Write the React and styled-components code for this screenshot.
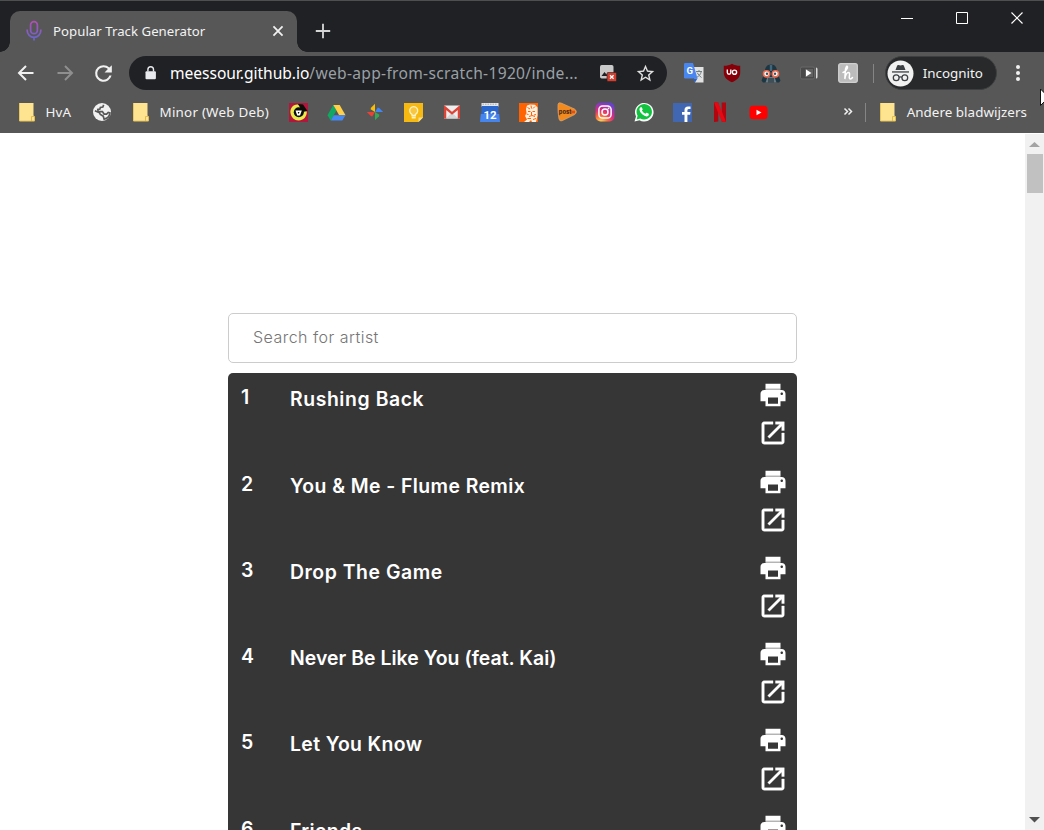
import React from "react";
import styled, { createGlobalStyle } from "styled-components";

const Global = createGlobalStyle`
  * { box-sizing: border-box; }
  html, body { margin: 0; padding: 0; overflow: hidden; background: #fff; }
  svg { display: block; flex: none; }
`;

const Window = styled.div`
  position: relative;
  display: flex;
  flex-direction: column;
  width: 1044px;
  height: 830px;
  overflow: hidden;
  background: #fff;
  font-family: "Noto Sans", "Open Sans", sans-serif;
`;

const TitleBar = styled.header`
  display: flex;
  height: 52px;
  border-top: 1px solid #4d504f;
  background: #202124;
  padding-left: 10px;
`;

const Tab = styled.div`
  position: relative;
  display: flex;
  align-items: center;
  width: 287px;
  height: 41px;
  margin-top: 10px;
  padding: 0 12px 1px 15px;
  border-radius: 10px 10px 0 0;
  background: #575757;
  &::before, &::after {
    content: "";
    position: absolute;
    bottom: 0;
    width: 10px;
    height: 10px;
  }
  &::before { left: -10px; background: radial-gradient(circle at 0 0, transparent 9.5px, #575757 10px); }
  &::after { right: -10px; background: radial-gradient(circle at 100% 0, transparent 9.5px, #575757 10px); }
`;

const Label = styled.span`
  flex: none;
  width: ${(p) => p.$w}px;
  font-size: ${(p) => p.$size || 13.4}px;
  letter-spacing: ${(p) => p.$ls || 0}px;
  line-height: 20px;
  color: ${(p) => p.$color || "#f3f3f3"};
  white-space: nowrap;
`;

const TabTitle = styled(Label)`margin-left: 10px;`;
const TabClose = styled.div`margin-left: auto;`;
const NewTab = styled.div`margin: 22px 0 0 18px;`;

const WindowControls = styled.div`
  display: flex;
  margin-left: auto;
  height: 34px;
`;

const ControlButton = styled.div`
  display: flex;
  align-items: center;
  justify-content: center;
  width: 55px;
`;

const Toolbar = styled.div`
  display: flex;
  align-items: center;
  height: 42px;
  padding-left: 7.3px;
  background: #575757;
`;

const Cell = styled.div`
  display: flex;
  flex: none;
  align-items: center;
  justify-content: center;
  width: 38.4px;
  height: 30px;
`;

const Omnibox = styled.div`
  display: flex;
  flex: none;
  align-items: center;
  width: 538px;
  height: 34px;
  margin: 0 7.8px 0 6.5px;
  padding-left: 14px;
  border-radius: 17px;
  background: #202124;
`;

const Url = styled.div`
  flex: none;
  width: 419px;
  margin-left: 11px;
  font-size: 15.6px;
  line-height: 22px;
  letter-spacing: 0.3px;
  color: #9aa0a6;
  white-space: nowrap;
`;
const Host = styled.span`color: #fff; letter-spacing: -0.04px;`;
const StarSlot = styled.div`margin-left: 8px;`;

const Divider = styled.div`
  flex: none;
  width: 1px;
  height: 19px;
  margin: ${(p) => p.$m};
  background: #858585;
`;

const IncognitoPill = styled.div`
  display: flex;
  flex: none;
  align-items: center;
  width: 112px;
  height: 34px;
  padding-left: 1px;
  border: 1px solid #3e3f41;
  border-radius: 17px;
  background: #28292b;
`;
const PillLabel = styled(Label)`margin-left: 9px;`;
const MenuDots = styled.div`margin-left: 18px;`;

const Bookmarks = styled.nav`
  display: flex;
  align-items: center;
  height: 39px;
  padding: 0 0 3px 18px;
  background: #575757;
`;

const Folder = styled.div`
  display: flex;
  align-items: center;
  gap: 9.6px;
  margin-right: ${(p) => p.$mr || 0}px;
`;
const GlobeMark = styled.div`margin-right: 20px;`;
const More = styled.div`margin-left: 64.5px;`;

const Page = styled.main`
  display: flex;
  flex: 1;
  min-height: 0;
  font-family: "Inter", sans-serif;
`;

const Content = styled.div`
  flex: 1;
  display: flex;
  flex-direction: column;
  padding: 180px 228px 0;
  overflow: hidden;
`;

const SearchField = styled.div`
  flex: none;
  display: flex;
  align-items: center;
  height: 50px;
  padding: 0 24px 2px;
  border: 1px solid #ccc;
  border-radius: 5px;
  color: #757575;
  font-size: 16px;
  font-weight: 300;
  letter-spacing: 0.47px;
`;

const TrackList = styled.ol`
  flex: none;
  margin: 10px 0 0;
  padding: 0;
  list-style: none;
  border-radius: 5px;
  background: #363636;
`;

const Track = styled.li`
  display: flex;
  height: 86.3px;
  padding: 7.3px 8.6px 0 13px;
  color: #fff;
  font-weight: 600;
`;
const Rank = styled.span`
  width: 49px;
  padding-top: 5px;
  font-size: 19.5px;
  line-height: 24px;
`;
const TrackTitle = styled.span`
  flex: 1;
  padding-top: 7px;
  font-size: 19.4px;
  line-height: 24px;
  letter-spacing: ${(p) => p.$ls}px;
`;
const Actions = styled.div`
  display: flex;
  flex-direction: column;
  gap: 8.2px;
`;

const Scrollbar = styled.aside`
  display: flex;
  flex-direction: column;
  align-items: center;
  justify-content: space-between;
  width: 19px;
  margin-top: 1px;
  padding: 8px 0 7px;
  background: #f1f1f1;
`;
const ThumbGroup = styled.div`
  display: flex;
  flex-direction: column;
  align-items: center;
  gap: 7px;
`;
const Thumb = styled.div`
  width: 16px;
  height: 39px;
  margin-left: 1px;
  background: #c1c1c1;
`;
const Cursor = styled.div`
  position: absolute;
  left: 1040px;
  top: 88px;
`;

const Mic = () => (
  <svg width="18" height="22" viewBox="0 0 18 22" fill="none" strokeWidth="1.7">
    <defs>
      <linearGradient id="mic" x1="0" y1="0" x2="0" y2="22" gradientUnits="userSpaceOnUse">
        <stop offset="0" stopColor="#b94bb4" />
        <stop offset="1" stopColor="#5b6bd0" />
      </linearGradient>
    </defs>
    <rect x="5.6" y="1.6" width="6.8" height="12" rx="3.4" stroke="url(#mic)" />
    <path d="M2.2 9.5v1a6.8 6.8 0 0 0 13.6 0v-1M9 17.4V20.5" stroke="url(#mic)" />
  </svg>
);

const Stroke = ({ w = 20, d, color = "#f1f1f1", sw = 2 }) => (
  <svg width={w} height={w} viewBox="0 0 20 20" fill="none" stroke={color} strokeWidth={sw}>
    <path d={d} />
  </svg>
);

const Reload = () => (
  <svg width="25" height="25" viewBox="0 0 24 24" fill="#f1f1f1">
    <path d="M17.65 6.35A7.96 7.96 0 0 0 12 4a8 8 0 1 0 7.73 10h-2.08A6 6 0 1 1 12 6c1.66 0 3.14.69 4.22 1.78L13 11h7V4l-2.35 2.35z" />
  </svg>
);

const Lock = () => (
  <svg width="16" height="16" viewBox="0 0 16 16">
    <rect x="2.500" y="6.3" width="10.4" height="8" rx="1" fill="#e8eaed" />
    <path d="M4.900 6.5V4.6a2.8 2.8 0 0 1 5.6 0v1.9" fill="none" stroke="#e8eaed" strokeWidth="1.4" />
  </svg>
);

const BlockedImage = () => (
  <svg width="18" height="18" viewBox="0 0 18 18">
    <rect x="1" y="1" width="13.5" height="13.5" rx="1.7" fill="#c9c9c9" />
    <path d="M2.5 12l3-4 2 2.5 1.5-1.8 2 3.3z" fill="#202124" />
    <rect x="8" y="8.5" width="9.5" height="9" rx="1" fill="#d23f31" stroke="#202124" strokeWidth=".6" />
    <path d="M11 11.2l3.6 3.6m0-3.6L11 14.8" stroke="#fff" strokeWidth="1.3" />
  </svg>
);

const Star = () => (
  <svg width="21" height="21" viewBox="0 0 24 24" fill="#e0e0e0">
    <path d="M22 9.24l-7.19-.62L12 2 9.19 8.63 2 9.24l5.46 4.73L5.82 21 12 17.27 18.18 21l-1.63-7.03L22 9.24zM12 15.4l-3.76 2.27 1-4.28-3.32-2.88 4.38-.38L12 6.1l1.71 4.04 4.38.38-3.32 2.88 1 4.28L12 15.4z" />
  </svg>
);

const Translate = () => (
  <svg width="20" height="20" viewBox="0 0 20 20">
    <path d="M8 4h11.5v15.5H11z" fill="#e2e2e2" />
    <path d="M12 8.5h6M15 7v1.5m2.3 0c-.6 3-2.4 4.5-4.3 5.7m.2-4.5c1 2 2.5 3.5 4.3 4.8" fill="none" stroke="#6f8085" strokeWidth="1" />
    <path d="M0 1.2Q0 0 1.2 0H9l4.5 15.5H1.2Q0 15.5 0 14.3z" fill="#4a86f0" />
    <path d="M8.5 15.5h5L11 19.5z" fill="#2e62bd" />
    <text x="2.4" y="11" fontFamily="Roboto, sans-serif" fontWeight="700" fontSize="9.5" fill="#fff">G</text>
  </svg>
);

const Shield = () => (
  <svg width="18" height="20" viewBox="0 0 18 20">
    <path d="M9 .8c2.4 1.5 5 2 8.2 2v6.7c0 4.8-3.3 7.7-8.2 9.8-4.9-2.1-8.2-5-8.2-9.8V2.8c3.2 0 5.8-.5 8.2-2z" fill="#850008" />
    <path d="M4.300 6.500v3a1.700 1.700 0 0 0 3.500 0v-3" fill="none" stroke="#fff" strokeWidth="1.4" />
    <circle cx="11.5" cy="9.2" r="2.1" fill="none" stroke="#fff" strokeWidth="1.4" />
  </svg>
);

const Vader = () => (
  <svg width="20" height="19" viewBox="0 0 20 19">
    <path d="M10 .5C14.500.5 16 4 16.200 8L19.500 16.500 18 18.500H2L.500 16.500 3.800 8C4 4 5.500 .5 10 .5z" fill="#1d3644" />
    <path d="M8.800 1h2.400v6H8.800z" fill="#40677b" />
    <path d="M6.500 13h7l2 5.500h-11z" fill="#697b84" />
    <path d="M8 14v4.500m2-4.500v4.500m2-4.500v4.500" stroke="#17252d" />
    <circle cx="5.600" cy="9.800" r="3.100" fill="#fff" stroke="#ef6b4d" strokeWidth="1.600" />
    <circle cx="14.400" cy="9.800" r="3.100" fill="#fff" stroke="#ef6b4d" strokeWidth="1.600" />
    <circle cx="6" cy="9.800" r="1.200" fill="#34505f" />
    <circle cx="14" cy="9.800" r="1.200" fill="#34505f" />
  </svg>
);

const VideoExt = () => (
  <svg width="18" height="14" viewBox="0 0 18 14">
    <rect x=".5" y="1" width="14" height="12" rx="1.5" fill="#4a4a4a" stroke="#696969" />
    <rect x="5" y="3" width="8" height="8" fill="#626262" />
    <path d="M6 3.500l5.500 3.500L6 10.500z" fill="#fff" />
    <path d="M16 1.500q1.500 0 1.500 1.500v8q0 1.500-1.500 1.500z" fill="#ddd" />
  </svg>
);

const Honey = () => (
  <svg width="20" height="20" viewBox="0 0 20 20">
    <rect x=".7" y=".7" width="18.600" height="18.600" rx="2" fill="#bcbcbc" stroke="#d0d0d0" strokeWidth="1.300" />
    <path d="M5 9.500c2.500-1 5-4 4.500-5.800-.7-1.500-2 1-2.200 4L6.800 16c.7-4 2-6.400 3.700-6.400 2 0 .6 3.400.8 5.200.2 1.500 2 1.500 3.200-.3" fill="none" stroke="#fff" strokeWidth="1.500" strokeLinecap="round" />
  </svg>
);

const IncognitoIcon = () => (
  <svg width="27" height="27" viewBox="0 0 27 27">
    <circle cx="13.5" cy="13.500" r="13" fill="#f1f1f1" />
    <path d="M8.500 10l1.600-4.300q.4-1 1.400-.7l2 .6 2-.6q1-.3 1.400.7L18.500 10z" fill="#3c4043" />
    <path d="M5 11.300h17v1.300H5z" fill="#3c4043" />
    <g fill="none" stroke="#3c4043" strokeWidth="1.300">
      <circle cx="9.200" cy="17.700" r="2.900" />
      <circle cx="17.800" cy="17.700" r="2.900" />
      <path d="M12 17.300q1.500-1 3 0" />
    </g>
  </svg>
);

const Dots = () => (
  <svg width="6" height="18" viewBox="0 0 6 18" fill="#f1f1f1">
    <circle cx="3" cy="3" r="2" /><circle cx="3" cy="9" r="2" /><circle cx="3" cy="15" r="2" />
  </svg>
);

const FolderIcon = () => (
  <svg width="18" height="20" viewBox="0 0 18 20">
    <path d="M1.500 1h14v12.500l1 1V19h-15z" fill="#fee391" />
    <path d="M1.500 1v18h15" fill="none" stroke="#e8c75e" />
    <path d="M13.500 19v-4.500h3V19" fill="none" stroke="#e3bd4d" />
  </svg>
);

const Globe = () => (
  <svg width="20" height="20" viewBox="0 0 24 24">
    <circle cx="12" cy="12" r="10.800" fill="#f1f1f1" />
    <path d="M14 3.500l-1 2.500-3 .5-.5 2-2.500.5.500 2.500h5l2 3h3l2-2 2 .5a8.500 8.500 0 0 1-7 7.500l-1-3.500-3.500-2L9 13 3.500 10.500" fill="none" stroke="#575757" strokeWidth="2" />
  </svg>
);

const MarkV = () => (
  <svg width="19" height="19" viewBox="0 0 19 19">
    <path d="M0 0h19v19H0z" fill="#b3163d" />
    <path d="M9 1.500C4 1 .8 5.500 1.500 10c.6 4.500 4 7.500 8 7.500 5 0 8.500-4 8.300-9z" fill="#e8e94b" />
    <path d="M9 1l5 .5 4.500 6.500-5 1z" fill="#0b0b08" />
    <circle cx="9.800" cy="9.300" r="5" fill="#0b0b08" />
    <path d="M6.500 7.500h6.300l-1.800 5H8.200z" fill="#fff" />
    <path d="M8.700 9h1.800l-.9 2z" fill="#0b0b08" />
  </svg>
);

const Drive = () => (
  <svg width="19" height="19" viewBox="0 0 19 19">
    <path d="M6.300 2L.5 12.300 3.700 17.500 9.500 7.500z" fill="#11a861" />
    <path d="M6.300 2h6.400l5.800 10.300h-6.300z" fill="#ffcf48" />
    <path d="M6.700 12.300h11.800l-3.200 5.200H3.700z" fill="#4688f4" />
  </svg>
);

const BLADE = "M9 .8V9L4.600 6.200 5 4.800z";
const Photos = () => (
  <svg width="18" height="18" viewBox="0 0 18 18">
    <path d={BLADE} fill="#fbbc05" />
    <path d={BLADE} fill="#4285f4" transform="rotate(90 9 9)" />
    <path d={BLADE} fill="#34a853" transform="rotate(180 9 9)" />
    <path d={BLADE} fill="#ea4335" transform="rotate(270 9 9)" />
  </svg>
);

const Keep = () => (
  <svg width="19" height="19" viewBox="0 0 19 19">
    <path d="M0 0h19v14.500L14.500 19H0z" fill="#f5b912" />
    <path d="M19 14.500h-4.500V19z" fill="#fbe08a" />
    <path d="M8 12.500v-1.200a4 4 0 1 1 3.400 0v1.200z" fill="#f8c640" stroke="#fff3c4" strokeWidth="1.300" />
    <path d="M7.700 13.500h4v2h-4z" fill="#fff3c4" />
  </svg>
);

const Gmail = () => (
  <svg width="18" height="18" viewBox="0 0 18 18">
    <path d="M1 2.500h16v13H1z" fill="#eee" />
    <path d="M3 15.500l6-6 6 6z" fill="#d5d5d5" />
    <path d="M2.100 15.500V4.500L9 10.300l6.900-5.800v11" fill="none" stroke="#dc4437" strokeWidth="2.300" />
  </svg>
);

const Calendar = () => (
  <svg width="20" height="19" viewBox="0 0 20 19">
    <path d="M1.500 0h17v4h-17z" fill="#e3e6ec" />
    <path d="M1.500 3h17v6L20 19H0L1.500 9z" fill="#2a66cc" />
    <path d="M.8 11h18.400l.8 8H0z" fill="#4585ed" />
    <path d="M2.500 1.200h15" stroke="#aaa" strokeDasharray="1.500 1" />
    <text x="10" y="15.600" textAnchor="middle" fontFamily="Roboto, sans-serif" fontWeight="700" fontSize="11.500" fill="#fff">12</text>
  </svg>
);

const Lion = () => (
  <svg width="19" height="19" viewBox="0 0 19 19">
    <path d="M0 0h19v19H0z" fill="#ff6200" />
    <path d="M8 2.500l3-1 5 .3 2.500 2.700v8L17 19h-4l-1-2-2 2H5l3-2.500-2-3.500 1.500-3-.5-4z" fill="#fff0e2" />
    <path d="M8.500 4.500l2.500 1.500M12 2.500l.5 3M16 3.500l-2 2M9 8.500h2.500m2 0H16M12.500 9v3M10 13.500l3-1 3 1M7.500 11l2 .5m-1 4h3.500m3-3.500l2-.5M14 16.500l3-1" stroke="#ff6200" strokeWidth="1" fill="none" />
  </svg>
);

const Post = () => (
  <svg width="20" height="20" viewBox="0 0 20 20">
    <path d="M1 2.500Q1.200 0 4 1l13.500 6q3.500 2.500.3 5.500L5 18.800Q2.500 19.500 2 17Q.5 9 1 2.500z" fill="#f28a1d" stroke="#d9a77a" strokeWidth=".7" />
    <text x="1.800" y="12" fontFamily="Inter, sans-serif" fontWeight="800" fontSize="5.700" fill="#4c2a15">post</text>
    <path d="M14 8.700h4v2.600h-4z" fill="#df4d20" />
  </svg>
);

const Instagram = () => (
  <svg width="20" height="20" viewBox="0 0 20 20">
    <defs>
      <radialGradient id="insta" cx=".28" cy="1.050" r="1.100">
        <stop offset=".05" stopColor="#ffd45a" />
        <stop offset=".35" stopColor="#f9683d" />
        <stop offset=".62" stopColor="#d82b83" />
        <stop offset="1" stopColor="#6442cf" />
      </radialGradient>
    </defs>
    <rect x=".5" y=".5" width="19" height="19" rx="5" fill="url(#insta)" />
    <g fill="none" stroke="#fff" strokeWidth="1.500">
      <rect x="3.900" y="3.900" width="12.200" height="12.200" rx="3.600" />
      <circle cx="10" cy="10" r="3" />
    </g>
    <circle cx="13.500" cy="6.400" r=".9" fill="#fff" />
  </svg>
);

const WhatsApp = () => (
  <svg width="20" height="20" viewBox="0 0 20 20">
    <path d="M.5 19.500l1.500-5A9.300 9.300 0 1 1 5.500 18.200z" fill="#fff" />
    <path d="M2.600 17.400l1-3.700a7.700 7.700 0 1 1 2.700 2.700z" fill="#12c33f" />
    <path d="M6.300 5.500q1-1 1.700.2l.7 1.600q.1.500-.8 1.300 1.200 2.300 3.500 3.200 1-1.300 1.500-1l1.900 1q.7 1.800-1.300 2.500-2.300.7-5.300-2Q5.300 9.300 5.400 7.500q.1-1.300.9-2z" fill="#fff" />
  </svg>
);

const Facebook = () => (
  <svg width="19" height="19" viewBox="0 0 19 19">
    <path d="M0 0h19v19H0z" fill="#4267b2" />
    <path d="M11.500 19v-7.200H9V9h2.500V7q0-3.500 3.500-3.500h2.500V6H16q-1.600 0-1.600 1.300V9h3.100l-.4 2.800h-2.700V19z" fill="#fff" />
  </svg>
);

const Netflix = () => (
  <svg width="14" height="20" viewBox="0 0 14 20">
    <path d="M1 .5h4.300v19L1 20zM8.700.5H13V20l-4.300-.5z" fill="#b1060f" />
    <path d="M1 .5h4.300L13 20l-4.300-.5z" fill="#e50914" />
  </svg>
);

const YouTube = () => (
  <svg width="19" height="15" viewBox="0 0 19 15">
    <rect x=".5" y=".8" width="18" height="13.400" rx="3.500" fill="#f00" />
    <path d="M7.500 4.700l5 2.800-5 2.800z" fill="#fff" />
  </svg>
);

const marks = [MarkV, Drive, Photos, Keep, Gmail, Calendar, Lion, Post, Instagram, WhatsApp, Facebook, Netflix, YouTube];
const extensions = [Translate, Shield, Vader, VideoExt, Honey];

const PRINT = "M19 8H5c-1.66 0-3 1.34-3 3v6h4v4h12v-4h4v-6c0-1.66-1.34-3-3-3zm-3 11H8v-5h8v5zm3-7c-.55 0-1-.45-1-1s.45-1 1-1 1 .45 1 1-.45 1-1 1z";
const OPEN = "M19 19H5V5h7V3H5c-1.11 0-2 .9-2 2v14c0 1.1.89 2 2 2h14c1.1 0 2-.9 2-2v-7h-2v7zM14 3v2h3.59l-9.83 9.83 1.41 1.41L19 6.41V10h2V3h-7z";

const PrintIcon = () => (
  <svg width="30" height="30" viewBox="0 0 24 24" fill="#fff">
    <path d="M6 6.800h12v1.300H6z" fill="#b4b4b4" />
    <path d="M6 3h12v4H6z" />
    <path d={PRINT} />
  </svg>
);
const OpenIcon = () => (
  <svg width="30" height="30" viewBox="0 0 24 24" fill="#fff" stroke="#fff" strokeWidth=".3"><path d={OPEN} /></svg>
);

const tracks = [
  { title: "Rushing Back", ls: 0.58 },
  { title: "You & Me - Flume Remix", ls: 0.42 },
  { title: "Drop The Game", ls: 0.54 },
  { title: "Never Be Like You (feat. Kai)", ls: 0.05 },
  { title: "Let You Know", ls: 0.37 },
  { title: "Friends", ls: 0.35 },
];

export default function App() {
  return (
    <Window>
      <Global />
      <TitleBar>
        <Tab>
          <Mic />
          <TabTitle $w={160} $size={13.2} $ls={0.04}>Popular Track Generator</TabTitle>
          <TabClose><Stroke w={14} d="M3.500 3.500l13 13m0-13l-13 13" sw={2.600} /></TabClose>
        </Tab>
        <NewTab><Stroke w={16} d="M10 1v18M1 10h18" sw={2.300} color="#d5d5d5" /></NewTab>
        <WindowControls>
          <ControlButton><Stroke w={20} d="M4 10.500h12" sw={1} color="#fff" /></ControlButton>
          <ControlButton><Stroke w={20} d="M4.500 4.500h11v11h-11z" sw={1} color="#fff" /></ControlButton>
          <ControlButton><Stroke w={20} d="M4.500 4.500l11 11m0-11l-11 11" sw={1.200} color="#fff" /></ControlButton>
        </WindowControls>
      </TitleBar>
      <Toolbar>
        <Cell><Stroke d="M17.500 10H3.500M10 3l-7 7 7 7" /></Cell>
        <Cell><Stroke d="M2.500 10h14M10 3l7 7-7 7" color="#8f8f8f" /></Cell>
        <Cell><Reload /></Cell>
        <Omnibox>
          <Lock />
          <Url><Host>meessour.github.io</Host>/web-app-from-scratch-1920/inde...</Url>
          <Cell><BlockedImage /></Cell>
          <StarSlot><Star /></StarSlot>
        </Omnibox>
        {extensions.map((Icon, i) => <Cell key={i}><Icon /></Cell>)}
        <Divider $m="0 11px 0 6px" />
        <IncognitoPill>
          <IncognitoIcon />
          <PillLabel $w={62} $size={13.4}>Incognito</PillLabel>
        </IncognitoPill>
        <MenuDots><Dots /></MenuDots>
      </Toolbar>
      <Bookmarks>
        <Folder $mr={19.4}><FolderIcon /><Label $w={27} $ls={0.1}>HvA</Label></Folder>
        <GlobeMark><Globe /></GlobeMark>
        <Folder $mr={9.4}><FolderIcon /><Label $w={110} $ls={0.22}>Minor (Web Deb)</Label></Folder>
        {marks.map((Icon, i) => <Cell key={i}><Icon /></Cell>)}
        <More>
          <svg width="10" height="10" viewBox="0 0 10 10" fill="none" stroke="#f1f1f1" strokeWidth="1.500">
            <path d="M1.500 1.500l3 3-3 3M5.500 1.500l3 3-3 3" />
          </svg>
        </More>
        <Divider $m="0 13.500px 0 12px" />
        <Folder><FolderIcon /><Label $w={124} $ls={0.04}>Andere bladwijzers</Label></Folder>
      </Bookmarks>
      <Page>
        <Content>
          <SearchField>Search for artist</SearchField>
          <TrackList>
            {tracks.map((t, i) => (
              <Track key={t.title}>
                <Rank>{i + 1}</Rank>
                <TrackTitle $ls={t.ls}>{t.title}</TrackTitle>
                <Actions><PrintIcon /><OpenIcon /></Actions>
              </Track>
            ))}
          </TrackList>
        </Content>
        <Scrollbar>
          <ThumbGroup>
            <svg width="11" height="5" viewBox="0 0 11 5"><path d="M0 5L5.500 0 11 5z" fill="#a3a3a3" /></svg>
            <Thumb />
          </ThumbGroup>
          <svg width="11" height="6" viewBox="0 0 11 6"><path d="M0 0h11L5.500 5.500z" fill="#505050" /></svg>
        </Scrollbar>
      </Page>
      <Cursor>
        <svg width="4" height="19" viewBox="0 0 4 19"><path d="M.5 1v16.500l4-4V5z" fill="#fff" stroke="#111" /></svg>
      </Cursor>
    </Window>
  );
}
